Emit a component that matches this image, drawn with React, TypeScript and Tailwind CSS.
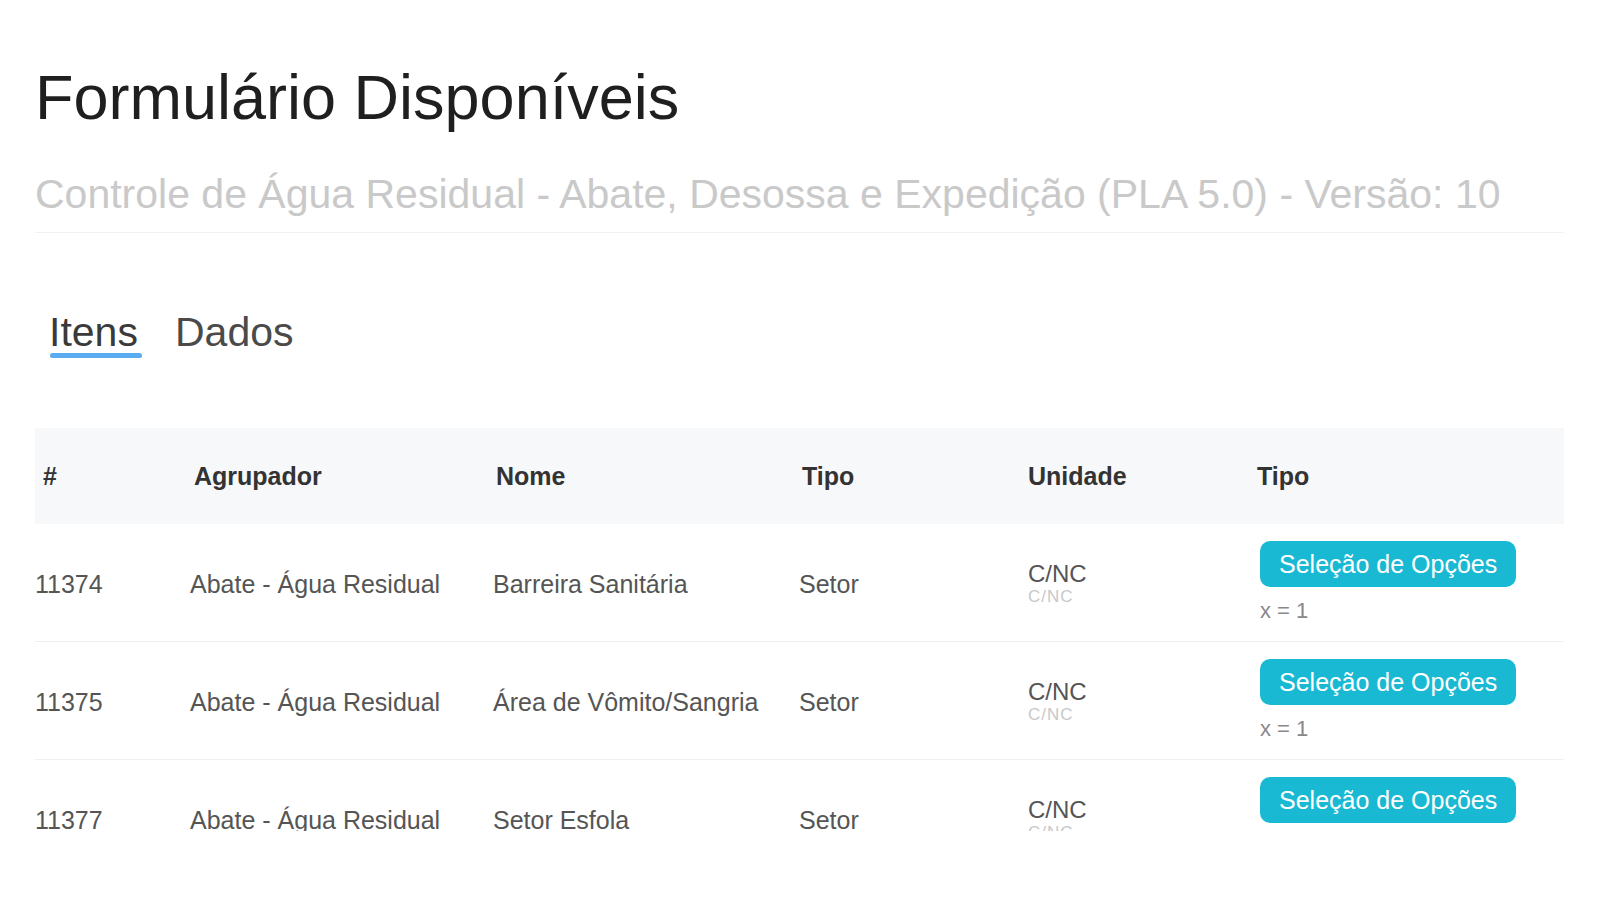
import React from "react";

type Row = {
  id: string;
  grp: string;
  nome: string;
  tipo: string;
  un: string;
  sub: string;
  x: string;
};

const rows: Row[] = [
  { id: "11374", grp: "Abate - Água Residual", nome: "Barreira Sanitária", tipo: "Setor", un: "C/NC", sub: "C/NC", x: "x = 1" },
  { id: "11375", grp: "Abate - Água Residual", nome: "Área de Vômito/Sangria", tipo: "Setor", un: "C/NC", sub: "C/NC", x: "x = 1" },
  { id: "11377", grp: "Abate - Água Residual", nome: "Setor Esfola", tipo: "Setor", un: "C/NC", sub: "C/NC", x: "x = 1" },
];

export default function App() {
  return (
    <div className="h-[831px] overflow-hidden bg-white px-[35px] pt-[61px] font-[Liberation_Sans,Arial,sans-serif]">
      <h1 className="text-[63px] leading-[72px] font-normal text-[#1f1f1f]">Formulário Disponíveis</h1>
      <div className="mt-[37px] border-b border-[#f1f1f1] pb-[14px]">
        <p className="text-[41px] leading-[48px] text-[#c9c9c9]">
          Controle de Água Residual - Abate, Desossa e Expedição (PLA 5.0) - Versão: 10
        </p>
      </div>

      <div className="mt-[79px] flex gap-[33px] pl-[14px]">
        <div className="flex flex-col">
          <span className="text-[41px] leading-[41px] text-[#3a3a3a]">Itens</span>
          <span className="ml-[1px] h-[5px] w-[92px] rounded-full bg-[#5aabf0]" />
        </div>
        <div>
          <span className="text-[41px] leading-[41px] text-[#4a4a4a]">Dados</span>
        </div>
      </div>

      <div className="mt-[70px]">
        <div className="grid h-[96px] grid-cols-[155px_303px_306px_229px_229px_1fr] items-center bg-[#f7f8fa] text-[25px] font-bold leading-[30px] text-[#333333]">
          <div className="pl-2">#</div>
          <div className="pl-[4px]">Agrupador</div>
          <div className="pl-[3px]">Nome</div>
          <div className="pl-[3px]">Tipo</div>
          <div>Unidade</div>
          <div>Tipo</div>
        </div>

        {rows.map((r) => (
          <div
            key={r.id}
            className="grid grid-cols-[155px_303px_306px_229px_229px_1fr] items-center border-b border-[#f0f0f0] pt-[17px] pb-[17px] text-[25px] leading-[30px] text-[#555555]"
          >
            <div className="pt-[3px]">{r.id}</div>
            <div className="pt-[3px]">{r.grp}</div>
            <div className="pt-[3px]">{r.nome}</div>
            <div className="pt-[3px]">{r.tipo}</div>
            <div className="flex flex-col pt-[3px]">
              <span className="text-[24px] leading-[26px] text-[#555555]">{r.un}</span>
              <span className="text-[17px] leading-[20px] tracking-[1px] text-[#c8c8c8]">{r.sub}</span>
            </div>
            <div className="flex flex-col items-start pl-[3px]">
              <span className="inline-flex h-[46px] items-center rounded-[10px] bg-[#1ab9d3] px-[19px] text-[25px] text-white">
                Seleção de Opções
              </span>
              <span className="mt-[11px] text-[22px] leading-[26px] text-[#888888]">{r.x}</span>
            </div>
          </div>
        ))}
      </div>
    </div>
  );
}
